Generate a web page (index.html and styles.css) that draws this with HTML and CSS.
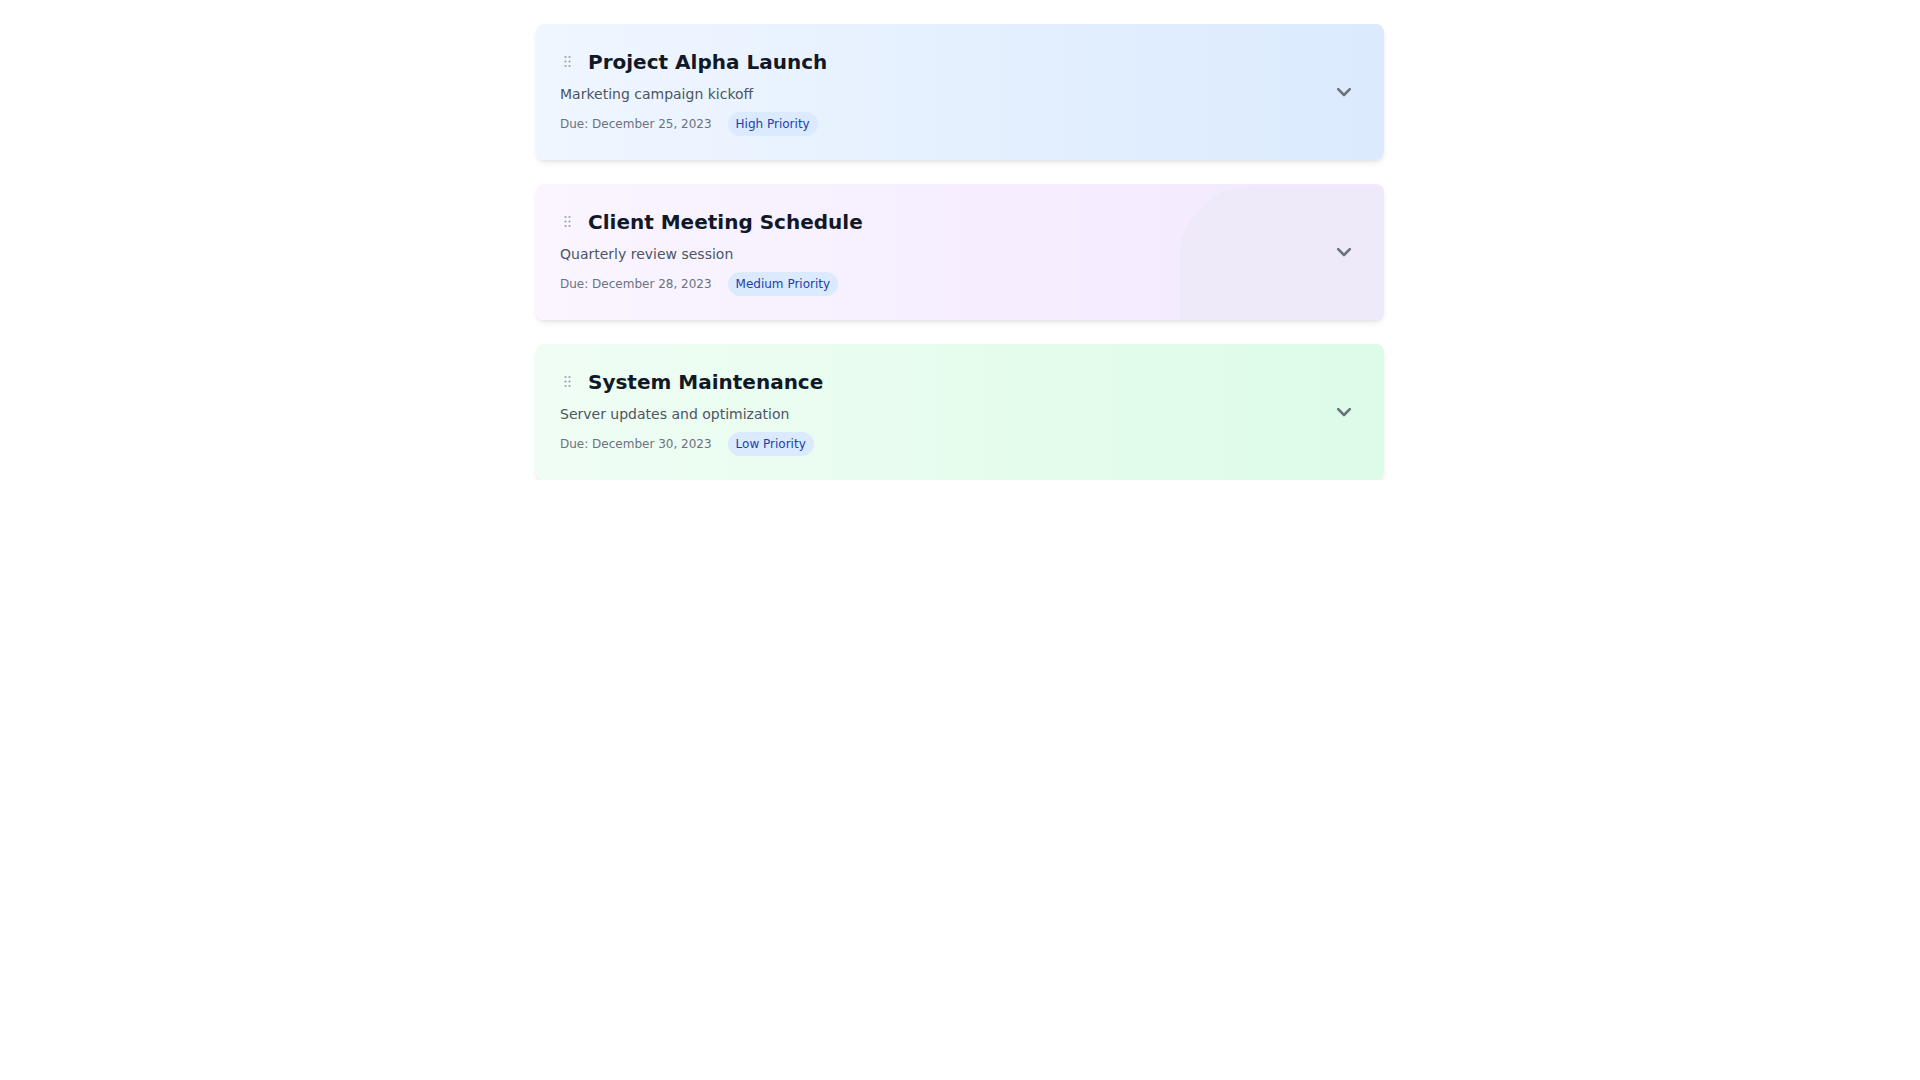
FILE: index.html
```html
<!DOCTYPE html>
<html lang="en">
<head>
<meta charset="utf-8">
<title>Tasks</title>
<link rel="stylesheet" href="styles.css">
</head>
<body>
<main class="list">
  <article class="card card-blue">
    <div class="card-body">
      <div class="title-row">
        <span class="handle"><svg width="16" height="16" viewBox="0 0 16 16"><g fill="#9ca3af"><circle cx="5.5" cy="3" r="1.1"/><circle cx="9.5" cy="3" r="1.1"/><circle cx="5.5" cy="7.5" r="1.1"/><circle cx="9.5" cy="7.5" r="1.1"/><circle cx="5.5" cy="12" r="1.1"/><circle cx="9.5" cy="12" r="1.1"/></g></svg></span>
        <h2 class="title">Project Alpha Launch</h2>
      </div>
      <p class="subtitle">Marketing campaign kickoff</p>
      <div class="meta">
        <span class="due">Due: December 25, 2023</span>
        <span class="badge">High Priority</span>
      </div>
    </div>
    <button class="toggle" aria-label="Expand"><svg width="24" height="24" viewBox="0 0 24 24" fill="none" stroke="#6b7280" stroke-width="2.6" stroke-linecap="round" stroke-linejoin="round"><path d="M6.2 9.2l5.8 5.8 5.8-5.8"/></svg></button>
  </article>

  <article class="card card-purple">
    <div class="decor"></div>
    <div class="card-body">
      <div class="title-row">
        <span class="handle"><svg width="16" height="16" viewBox="0 0 16 16"><g fill="#9ca3af"><circle cx="5.5" cy="3" r="1.1"/><circle cx="9.5" cy="3" r="1.1"/><circle cx="5.5" cy="7.5" r="1.1"/><circle cx="9.5" cy="7.5" r="1.1"/><circle cx="5.5" cy="12" r="1.1"/><circle cx="9.5" cy="12" r="1.1"/></g></svg></span>
        <h2 class="title">Client Meeting Schedule</h2>
      </div>
      <p class="subtitle">Quarterly review session</p>
      <div class="meta">
        <span class="due">Due: December 28, 2023</span>
        <span class="badge">Medium Priority</span>
      </div>
    </div>
    <button class="toggle" aria-label="Expand"><svg width="24" height="24" viewBox="0 0 24 24" fill="none" stroke="#6b7280" stroke-width="2.6" stroke-linecap="round" stroke-linejoin="round"><path d="M6.2 9.2l5.8 5.8 5.8-5.8"/></svg></button>
  </article>

  <article class="card card-green">
    <div class="card-body">
      <div class="title-row">
        <span class="handle"><svg width="16" height="16" viewBox="0 0 16 16"><g fill="#9ca3af"><circle cx="5.5" cy="3" r="1.1"/><circle cx="9.5" cy="3" r="1.1"/><circle cx="5.5" cy="7.5" r="1.1"/><circle cx="9.5" cy="7.5" r="1.1"/><circle cx="5.5" cy="12" r="1.1"/><circle cx="9.5" cy="12" r="1.1"/></g></svg></span>
        <h2 class="title">System Maintenance</h2>
      </div>
      <p class="subtitle">Server updates and optimization</p>
      <div class="meta">
        <span class="due">Due: December 30, 2023</span>
        <span class="badge">Low Priority</span>
      </div>
    </div>
    <button class="toggle" aria-label="Expand"><svg width="24" height="24" viewBox="0 0 24 24" fill="none" stroke="#6b7280" stroke-width="2.6" stroke-linecap="round" stroke-linejoin="round"><path d="M6.2 9.2l5.8 5.8 5.8-5.8"/></svg></button>
  </article>
</main>
</body>
</html>
```

FILE: styles.css
```css
* { box-sizing: border-box; }
html, body {
  margin: 0;
  padding: 0;
  background: #ffffff;
  font-family: "DejaVu Sans", "Liberation Sans", sans-serif;
}
.list {
  width: 848px;
  margin: 0 auto;
  padding-top: 24px;
  display: flex;
  flex-direction: column;
  gap: 24px;
}
.card {
  position: relative;
  display: flex;
  align-items: center;
  justify-content: space-between;
  padding: 24px;
  border-radius: 8px;
  overflow: hidden;
  box-shadow: 0 4px 6px -1px rgba(0,0,0,0.08), 0 2px 4px -2px rgba(0,0,0,0.08);
}
.card-blue { background: linear-gradient(90deg, #eff6ff 0%, #dbeafe 100%); }
.card-purple { background: linear-gradient(90deg, #faf5ff 0%, #f3e8ff 100%); }
.card-green { background: linear-gradient(90deg, #f0fdf4 0%, #dcfce7 100%); }
.decor {
  position: absolute;
  top: 0;
  right: 0;
  bottom: 0;
  width: 204px;
  clip-path: path('M0 136 L0 64 C0 48 18 24 32 14 C42 7 50 3 68 3 L204 3 L204 136 Z');
  background-color: rgba(249, 247, 254, 0.8);
  background-image: radial-gradient(rgba(170, 160, 215, 0.2) 0.6px, transparent 0.9px);
  background-size: 2px 2px;
}
.card-body {
  position: relative;
  display: flex;
  flex-direction: column;
}
.title-row {
  display: flex;
  align-items: center;
  gap: 12px;
  height: 28px;
}
.handle {
  display: flex;
  width: 16px;
  height: 16px;
}
.title {
  margin: 0;
  font-size: 20px;
  line-height: 28px;
  font-weight: 700;
  color: #111827;
}
.subtitle {
  margin: 8px 0 0;
  font-size: 14px;
  line-height: 20px;
  color: #4b5563;
}
.meta {
  margin-top: 8px;
  display: flex;
  align-items: center;
  gap: 16px;
  height: 24px;
}
.due {
  font-size: 12px;
  line-height: 16px;
  color: #6b7280;
}
.badge {
  font-size: 12px;
  line-height: 16px;
  padding: 4px 8px;
  border-radius: 9999px;
  background: #dbeafe;
  color: #1e40af;
}
.toggle {
  position: relative;
  display: flex;
  padding: 4px;
  border: none;
  background: transparent;
  cursor: pointer;
}
```
